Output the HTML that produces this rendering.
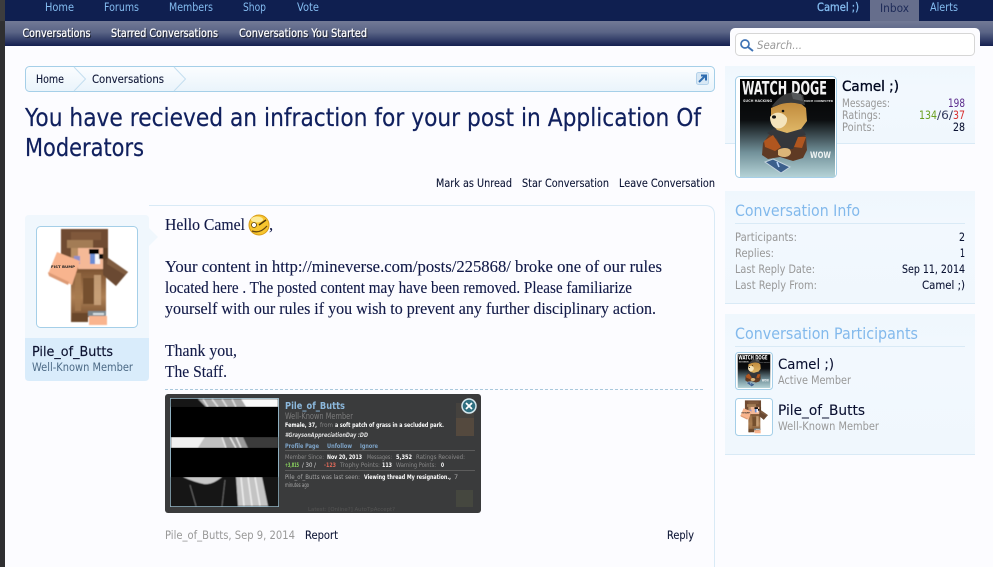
<!DOCTYPE html>
<html><head><meta charset="utf-8"><style>
html,body{margin:0;padding:0;background:#fcfcff;overflow:hidden}
svg{display:block}
text{font-family:"DejaVu Sans","Liberation Sans",sans-serif;font-size:11.500px;white-space:pre}
.s{font-family:"Liberation Serif","DejaVu Serif",serif;font-size:16.500px;fill:#121a48;stroke:#121a48;stroke-width:.12}
.g{fill:#989898}.d{fill:#0c1434;stroke:#0c1434;stroke-width:.1}.n{fill:#84bcf0}
.w{fill:#fff;stroke:#fff;stroke-width:.25;filter:drop-shadow(1px 1px 0 rgba(0,0,0,.55))}
.h{font-size:16px;fill:#82b9ec}
.p{font-size:6.5px;fill:#d8d8d8}.pb{font-size:6.5px;fill:#fff;font-weight:bold}.pg{font-size:6.5px;fill:#8a8a8a}.pl{font-size:6.5px;fill:#7ea4c8;font-weight:bold}
</style></head><body>
<svg width="993" height="567" viewBox="0 0 993 567" xmlns="http://www.w3.org/2000/svg">
<defs>
<filter id="soft" x="-5%" y="-5%" width="110%" height="110%"><feGaussianBlur stdDeviation=".45"/></filter>
<filter id="soft2" x="-5%" y="-5%" width="110%" height="110%"><feGaussianBlur stdDeviation=".6"/></filter>
<linearGradient id="sub" x1="0" y1="0" x2="0" y2="1"><stop offset="0" stop-color="#727a96"/><stop offset=".45" stop-color="#5a6486"/><stop offset="1" stop-color="#142050"/></linearGradient>
<linearGradient id="crumb" x1="0" y1="0" x2="0" y2="1"><stop offset="0" stop-color="#fbfdff"/><stop offset="1" stop-color="#eaf4fb"/></linearGradient>
<linearGradient id="panel" x1="0" y1="0" x2="0" y2="1"><stop offset="0" stop-color="#eff7fd"/><stop offset=".3" stop-color="#f2f8fe"/><stop offset="1" stop-color="#f0f7fd"/></linearGradient>
<linearGradient id="dogbg" x1="0" y1="0" x2="0" y2="1"><stop offset="0" stop-color="#000"/><stop offset=".42" stop-color="#0c0e10"/><stop offset=".75" stop-color="#72919a"/><stop offset="1" stop-color="#b4d2d6"/></linearGradient>
<linearGradient id="coat" x1="0" y1="0" x2="0" y2="1"><stop offset="0" stop-color="#7b5231"/><stop offset=".55" stop-color="#ad7f54"/><stop offset="1" stop-color="#6f4a2b"/></linearGradient>
<linearGradient id="dhead" x1="0" y1="0" x2="0" y2="1"><stop offset="0" stop-color="#c08a3c"/><stop offset="1" stop-color="#e0b868"/></linearGradient>

<symbol id="dog" viewBox="0 0 105 105">
<rect x="5" y="4" width="95" height="98" fill="url(#dogbg)"/>
<text x="7" y="19.500" style="font-size:19px;font-weight:bold;fill:#f2f2f2" textLength="85" lengthAdjust="spacingAndGlyphs">WATCH DOGE</text>
<text x="8" y="27" style="font-size:3.600px;font-weight:bold;fill:#ddd" textLength="29" lengthAdjust="spacingAndGlyphs">SUCH HACKING</text>
<text x="69" y="27" style="font-size:3px;font-weight:bold;fill:#ddd" textLength="29" lengthAdjust="spacingAndGlyphs">MUCH CONNECTED</text>
<path d="M34 60 L28 68 L27 80 L33 84 L45 82 L58 86 L68 83 L72 75 L71 62 L64 54 L40 54Z" fill="#5f3a24"/>
<path d="M32 58 L44 50 L66 50 L71 60 L63 62 L58 74 L46 74 L42 64Z" fill="#35373b"/>
<path d="M29 66 L38 60 L46 72 L40 76 L30 72Z M71 62 L63 62 L59 72 L67 73Z" fill="#b0561f"/>
<path d="M36 33 L48 28 L64 27 L71 33 L72 46 L66 54 L52 58 L42 55 L36 48Z" fill="url(#dhead)"/>
<path d="M35 42 C39 36 48 36 52 43 C53 50 46 55 41 53 C37 52 35 47 35 42Z" fill="#f4e4bc"/>
<path d="M37 31 C44 22 50 18 56 18 L68 20 L70 30 L60 28 C52 27 44 29 38 32Z" fill="#3a3b3c"/>
<path d="M56 17 L66 19 L68 26 L58 24Z" fill="#55585a"/>
<ellipse cx="39" cy="42" rx="2" ry="1.600" fill="#111"/><circle cx="48" cy="36" r="1.300" fill="#111"/>
<path d="M43 75 C48 72 56 72 56 78 C54 83 47 83 43 80Z" fill="#dcb578"/>
<path d="M30 87 L38 84 L55 92 L46 98Z" fill="#3c5f8c" stroke="#c2d2dc" stroke-width="1"/>
<path d="M42 87 L44 92" stroke="#bcd8ff" stroke-width="1.500"/>
<text x="75" y="83" style="font-size:9px;font-weight:bold;fill:#eef2f2" textLength="21" lengthAdjust="spacingAndGlyphs">WOW</text>
</symbol>

<symbol id="skin" viewBox="0 0 105 105">
<g filter="url(#soft)">
<rect x="26" y="4" width="47" height="33" fill="#6f4c30"/>
<rect x="36" y="7" width="30" height="8" fill="#80593a"/>
<rect x="32" y="15" width="26" height="8" fill="#a37c54"/>
<rect x="36" y="23" width="8" height="14" fill="#b98e64"/>
<rect x="66" y="23" width="7" height="14" fill="#5e4028"/>
<path d="M36 42 H71 V90 L66 92 H42 V97 H36Z" fill="url(#coat)"/>
<rect x="48" y="53" width="11" height="26" fill="#74502e"/>
<rect x="40" y="48" width="6" height="38" fill="#a67a50" opacity=".8"/>
<rect x="59" y="50" width="7" height="30" fill="#cda880" opacity=".8"/>
<rect x="37" y="88" width="16" height="9" fill="#6a462c"/>
<rect x="43" y="23" width="25" height="21" fill="#f5b997"/>
<rect x="54" y="24" width="10" height="5" fill="#000"/>
<rect x="55" y="29" width="5" height="10" fill="#6a8cd4"/>
<rect x="60" y="29" width="5" height="10" fill="#f4f6fb"/>
<rect x="64" y="29" width="4" height="5" fill="#111"/>
<rect x="39" y="31" width="6" height="8" fill="#9090cc"/>
<path d="M73 33 L93 47 L81 61 L68 50 L68 36Z" fill="#6a4a32"/>
<path d="M73 33 L93 47 L90 50 L72 39Z" fill="#7f5c40"/>
<path d="M22 27 L45 36 L37 60 L13 49Z" fill="#f8b48e"/>
<path d="M13 47 L34 57 L33 60 L14 51Z" fill="#dd9a74"/>
<rect x="53" y="86" width="18" height="5" fill="#7d8990"/>
<rect x="58" y="88" width="11" height="2" fill="#d8dfe3"/>
<rect x="54" y="91" width="18" height="9" fill="#f9b48e"/>
</g>
<text x="16" y="43" style="font-size:3.600px;font-weight:bold;fill:#222" textLength="24" lengthAdjust="spacingAndGlyphs">FIST BUMP</text>
</symbol>
</defs>

<rect width="993" height="567" fill="#fcfcff"/>
<!-- top nav -->
<rect x="5" y="0" width="988" height="21" fill="#0f1f50"/>
<rect x="5" y="21" width="988" height="25" fill="url(#sub)"/>
<rect x="0" y="0" width="5" height="567" fill="#2f2f31"/>
<rect x="0" y="0" width="5" height="21" fill="#3c3c3e"/>
<text x="45" y="11" class="n" textLength="29" lengthAdjust="spacingAndGlyphs">Home</text>
<text x="104" y="11" class="n" textLength="35" lengthAdjust="spacingAndGlyphs">Forums</text>
<text x="169" y="11" class="n" textLength="44" lengthAdjust="spacingAndGlyphs">Members</text>
<text x="243" y="11" class="n" textLength="23" lengthAdjust="spacingAndGlyphs">Shop</text>
<text x="297" y="11" class="n" textLength="22" lengthAdjust="spacingAndGlyphs">Vote</text>
<text x="817" y="11" class="n" style="stroke:#84bcf0;stroke-width:.3" textLength="42" lengthAdjust="spacingAndGlyphs">Camel ;)</text>
<rect x="870" y="0" width="49" height="21" fill="#666e8c"/>
<text x="880" y="12" style="fill:#1d2a58" textLength="29" lengthAdjust="spacingAndGlyphs">Inbox</text>
<text x="930" y="11" class="n" textLength="28" lengthAdjust="spacingAndGlyphs">Alerts</text>
<text x="22.500" y="37" class="w" textLength="68" lengthAdjust="spacingAndGlyphs">Conversations</text>
<text x="111" y="37" class="w" textLength="107" lengthAdjust="spacingAndGlyphs">Starred Conversations</text>
<text x="239" y="37" class="w" textLength="128" lengthAdjust="spacingAndGlyphs">Conversations You Started</text>

<!-- search -->
<rect x="730" y="28" width="250" height="40" rx="5" fill="#fcfcff"/>
<rect x="735.500" y="33.500" width="239" height="22" rx="4" fill="#fff" stroke="#d6d6d6"/>
<circle cx="745" cy="44" r="4" fill="none" stroke="#3f73b5" stroke-width="1.700"/>
<path d="M748 47 L753 51" stroke="#3f73b5" stroke-width="2"/>
<text x="757" y="49" style="font-style:italic;fill:#999" textLength="45" lengthAdjust="spacingAndGlyphs">Search...</text>

<!-- breadcrumb -->
<rect x="25.500" y="66.500" width="689" height="25" rx="4" fill="url(#crumb)" stroke="#a5cfe8"/>
<path d="M74 67 L85.500 79 L74 91" fill="none" stroke="#c4dff0"/>
<path d="M174 67 L185.500 79 L174 91" fill="none" stroke="#c4dff0"/>
<text x="36" y="83" class="d" textLength="28" lengthAdjust="spacingAndGlyphs">Home</text>
<text x="92" y="83" class="d" textLength="72" lengthAdjust="spacingAndGlyphs">Conversations</text>
<rect x="696.500" y="72.500" width="12" height="12" rx="2" fill="#d8e8f5" stroke="#b4d2ea"/>
<path d="M699 82 L705 76 M701 75.500 H706 V80.500" fill="none" stroke="#2e6cb0" stroke-width="2"/>

<!-- title -->
<text x="25" y="126" style="font-size:25px;fill:#10205e;stroke:#10205e;stroke-width:.2" textLength="676" lengthAdjust="spacingAndGlyphs">You have recieved an infraction for your post in Application Of</text>
<text x="25" y="156" style="font-size:25px;fill:#10205e;stroke:#10205e;stroke-width:.2" textLength="119" lengthAdjust="spacingAndGlyphs">Moderators</text>

<!-- actions -->
<text x="436" y="187" class="d" textLength="76" lengthAdjust="spacingAndGlyphs">Mark as Unread</text>
<text x="522" y="187" class="d" textLength="87" lengthAdjust="spacingAndGlyphs">Star Conversation</text>
<text x="619" y="187" class="d" textLength="96" lengthAdjust="spacingAndGlyphs">Leave Conversation</text>

<!-- message -->
<path d="M149 205.500 H705 Q714.500 205.500 714.500 215 V567" fill="none" stroke="#d9eaf6"/>
<path d="M29 215 H145 Q149 215 149 219 V228 L158 237 L149 246 V338 H25 V219 Q25 215 29 215Z" fill="#f0f7fd"/>
<path d="M25 338 H149 V377 Q149 381 145 381 H29 Q25 381 25 377Z" fill="#d9ecfb"/>
<rect x="36.500" y="226.500" width="101" height="101" rx="4" fill="#fff" stroke="#a5cfe8"/>
<use href="#skin" x="35" y="225" width="105" height="105"/>
<text x="32" y="356" style="font-size:13px;fill:#0c1230;stroke:#0c1230;stroke-width:.15" textLength="81" lengthAdjust="spacingAndGlyphs">Pile_of_Butts</text>
<text x="32" y="371" style="fill:#4c6a86" textLength="101" lengthAdjust="spacingAndGlyphs">Well-Known Member</text>

<text x="165" y="230" class="s" textLength="80" lengthAdjust="spacingAndGlyphs">Hello Camel</text>
<circle cx="259" cy="225" r="10" fill="#f7c52e" stroke="#d89c18"/>
<ellipse cx="257" cy="219.500" rx="6" ry="3" fill="#fdeb98"/>
<circle cx="254" cy="225" r="2.500" fill="#fff" stroke="#5a4010" stroke-width=".8"/>
<path d="M259 225 L266 220" stroke="#4a3408" stroke-width="1.500"/>
<path d="M252 231 Q260 234 267 226" fill="none" stroke="#6a4a10" stroke-width="1.300"/>
<text x="269" y="230" class="s">,</text>
<text x="165" y="272" class="s" textLength="497" lengthAdjust="spacingAndGlyphs">Your content in http://mineverse.com/posts/225868/ broke one of our rules</text>
<text x="165" y="293" class="s" textLength="467" lengthAdjust="spacingAndGlyphs">located here . The posted content may have been removed. Please familiarize</text>
<text x="165" y="314" class="s" textLength="491" lengthAdjust="spacingAndGlyphs">yourself with our rules if you wish to prevent any further disciplinary action.</text>
<text x="165" y="356" class="s" textLength="72" lengthAdjust="spacingAndGlyphs">Thank you,</text>
<text x="165" y="377" class="s" textLength="62" lengthAdjust="spacingAndGlyphs">The Staff.</text>
<path d="M165 389.500 H704" stroke="#a9c8dc" stroke-dasharray="3 2"/>

<!-- popup image -->
<rect x="165" y="394" width="316" height="119" rx="3" fill="#3a3b3c"/>
<rect x="456" y="403" width="18" height="15" fill="#45423e"/>
<rect x="456" y="418" width="18" height="18" fill="#54493e"/>
<rect x="456" y="490" width="17" height="17" fill="#45473f"/>
<rect x="170.500" y="398.500" width="108" height="108" fill="#161616" stroke="#8fb0c0"/>
<g filter="url(#soft2)">
<rect x="171" y="399" width="107" height="8" fill="#141414"/>
<path d="M198 399 H241 L246 407 H206Z" fill="#a8a8a8"/>
<path d="M203 399 L208 407 M212 399 L218 407 M222 399 L227 407 M232 399 L236 407" stroke="#e2e2e2" stroke-width="1.500"/>
<path d="M241 399 H278 V407 H246Z" fill="#fafafa"/>
<rect x="171" y="437" width="107" height="11" fill="#9a9a9a"/>
<path d="M171 437 H205 L198 448 H171Z" fill="#f0f0f0"/>
<path d="M205 437 H222 L226 448 H198Z" fill="#c0c0c0"/>
<path d="M222 437 L226 448 M230 437 L236 448 M236 437 L241 448" stroke="#e8e8e8" stroke-width="1.500"/>
<path d="M243 437 H278 V448 H248Z" fill="#3a3a3a"/>
<rect x="171" y="477" width="107" height="29" fill="#181818"/>
<path d="M183 477 H222 Q212 485 204 484 Q194 482 183 477Z" fill="#c8c8c8"/>
<path d="M236 477 H262 L268 506 H238Z" fill="#c4c4c4"/>
<path d="M241 477 L244 506 M248 477 L252 506 M255 477 L260 506" stroke="#eee" stroke-width="1.500"/>
<path d="M190 485 L196 506 M225 480 L222 506" stroke="#666" stroke-width="1"/>
</g>
<rect x="171" y="407" width="107" height="30" fill="#000"/>
<rect x="171" y="448" width="107" height="29" fill="#000"/>
<circle cx="469" cy="406" r="7" fill="#2f6f80" stroke="#d6e8ee" stroke-width="1.500"/>
<path d="M466 403 L472 409 M472 403 L466 409" stroke="#fff" stroke-width="1.800"/>
<text x="285" y="409" style="font-size:10px;fill:#8cb8dc;font-weight:bold" textLength="60" lengthAdjust="spacingAndGlyphs">Pile_of_Butts</text>
<text x="285" y="419" style="font-size:8.500px;fill:#7c7c7c" textLength="68" lengthAdjust="spacingAndGlyphs">Well-Known Member</text>
<text x="285" y="427" class="pb" textLength="32" lengthAdjust="spacingAndGlyphs">Female, 37,</text>
<text x="320" y="427" class="pg" textLength="13" lengthAdjust="spacingAndGlyphs">from</text>
<text x="335" y="427" class="pb" textLength="109" lengthAdjust="spacingAndGlyphs">a soft patch of grass in a secluded park.</text>
<text x="285" y="437" style="font-size:6.500px;font-style:italic;fill:#ddd;font-weight:bold" textLength="83" lengthAdjust="spacingAndGlyphs">#GraysonAppreciationDay :DD</text>
<text x="285" y="448" class="pl" textLength="34" lengthAdjust="spacingAndGlyphs">Profile Page</text>
<text x="327" y="448" class="pl" textLength="25" lengthAdjust="spacingAndGlyphs">Unfollow</text>
<text x="360" y="448" class="pl" textLength="18" lengthAdjust="spacingAndGlyphs">Ignore</text>
<path d="M285 450.500 H475 M285 470.500 H475" stroke="#5c5c5c"/>
<text x="285" y="459" class="pg" textLength="39" lengthAdjust="spacingAndGlyphs">Member Since:</text>
<text x="327" y="459" class="pb" textLength="35" lengthAdjust="spacingAndGlyphs">Nov 20, 2013</text>
<text x="367" y="459" class="pg" textLength="25" lengthAdjust="spacingAndGlyphs">Messages:</text>
<text x="396" y="459" class="pb" textLength="16" lengthAdjust="spacingAndGlyphs">5,352</text>
<text x="416" y="459" class="pg" textLength="49" lengthAdjust="spacingAndGlyphs">Ratings Received:</text>
<text x="285" y="467" style="font-size:6.500px;fill:#8cd860;font-weight:bold" textLength="14" lengthAdjust="spacingAndGlyphs">+3,815</text>
<text x="302" y="467" class="p" textLength="14" lengthAdjust="spacingAndGlyphs">/ 30 /</text>
<text x="324" y="467" style="font-size:6.500px;fill:#e06a5a;font-weight:bold" textLength="12" lengthAdjust="spacingAndGlyphs">-123</text>
<text x="340" y="467" class="pg" textLength="40" lengthAdjust="spacingAndGlyphs">Trophy Points:</text>
<text x="382" y="467" class="pb" textLength="10" lengthAdjust="spacingAndGlyphs">113</text>
<text x="396" y="467" class="pg" textLength="40" lengthAdjust="spacingAndGlyphs">Warning Points:</text>
<text x="441" y="467" class="pb" textLength="3" lengthAdjust="spacingAndGlyphs">0</text>
<text x="285" y="479" class="p" textLength="75" lengthAdjust="spacingAndGlyphs" style="fill:#a8a8a8">Pile_of_Butts was last seen:</text>
<text x="364" y="479" class="pb" textLength="87" lengthAdjust="spacingAndGlyphs">Viewing thread My resignation.,</text>
<text x="454" y="479" class="p" style="fill:#a8a8a8">7</text>
<text x="285" y="487" class="p" style="fill:#a8a8a8" textLength="24" lengthAdjust="spacingAndGlyphs">minutes ago</text>
<text x="308" y="511" style="font-size:5.500px;fill:#555" textLength="87" lengthAdjust="spacingAndGlyphs">Latest: [Online?] AutoTpAccept?</text>

<text x="165" y="539" class="g" textLength="130" lengthAdjust="spacingAndGlyphs">Pile_of_Butts, Sep 9, 2014</text>
<text x="305" y="539" class="d" textLength="33" lengthAdjust="spacingAndGlyphs">Report</text>
<text x="667" y="539" class="d" textLength="27" lengthAdjust="spacingAndGlyphs">Reply</text>

<!-- sidebar 1 -->
<rect x="725" y="66" width="250" height="78" fill="url(#panel)"/>
<rect x="725" y="143" width="250" height="1" fill="#d9eaf6"/>
<rect x="735.500" y="76.500" width="101" height="101" rx="4" fill="#fff" stroke="#a5cfe8"/>
<use href="#dog" x="735" y="75" width="105" height="105"/>
<text x="842" y="91" style="font-size:14px;fill:#000820;stroke:#000820;stroke-width:.35" textLength="57" lengthAdjust="spacingAndGlyphs">Camel ;)</text>
<text x="842" y="107" class="g" textLength="48" lengthAdjust="spacingAndGlyphs">Messages:</text>
<text x="842" y="119" class="g" textLength="39" lengthAdjust="spacingAndGlyphs">Ratings:</text>
<text x="842" y="131" class="g" textLength="33" lengthAdjust="spacingAndGlyphs">Points:</text>
<text x="948" y="107" style="fill:#5a2a8c" textLength="17" lengthAdjust="spacingAndGlyphs">198</text>
<text x="919" y="119" style="fill:#6aa020" textLength="18" lengthAdjust="spacingAndGlyphs">134</text>
<text x="937" y="119" style="fill:#333c60" textLength="16" lengthAdjust="spacingAndGlyphs">/6/</text>
<text x="953" y="119" style="fill:#d83030" textLength="12" lengthAdjust="spacingAndGlyphs">37</text>
<text x="953" y="131" class="d" textLength="12" lengthAdjust="spacingAndGlyphs">28</text>

<!-- sidebar 2 -->
<rect x="725" y="191" width="250" height="112" fill="url(#panel)"/>
<rect x="725" y="303" width="250" height="1" fill="#d9eaf6"/>
<text x="735" y="216" class="h" textLength="125" lengthAdjust="spacingAndGlyphs">Conversation Info</text>
<rect x="735" y="223" width="230" height="1" fill="#d9eaf6"/>
<text x="735" y="241" class="g" textLength="62" lengthAdjust="spacingAndGlyphs">Participants:</text>
<text x="735" y="257" class="g" textLength="39" lengthAdjust="spacingAndGlyphs">Replies:</text>
<text x="735" y="273" class="g" textLength="80" lengthAdjust="spacingAndGlyphs">Last Reply Date:</text>
<text x="735" y="289" class="g" textLength="82" lengthAdjust="spacingAndGlyphs">Last Reply From:</text>
<text x="959" y="241" class="d" textLength="6" lengthAdjust="spacingAndGlyphs">2</text>
<text x="960" y="257" class="d" textLength="5" lengthAdjust="spacingAndGlyphs">1</text>
<text x="902" y="273" class="d" textLength="63" lengthAdjust="spacingAndGlyphs">Sep 11, 2014</text>
<text x="922" y="289" class="d" textLength="43" lengthAdjust="spacingAndGlyphs">Camel ;)</text>

<!-- sidebar 3 -->
<rect x="725" y="314" width="250" height="141" fill="url(#panel)"/>
<rect x="725" y="454" width="250" height="1" fill="#d9eaf6"/>
<text x="735" y="339" class="h" textLength="183" lengthAdjust="spacingAndGlyphs">Conversation Participants</text>
<rect x="735" y="346" width="230" height="1" fill="#d9eaf6"/>
<rect x="735.500" y="352.500" width="37" height="37" rx="3" fill="#fff" stroke="#a5cfe8"/>
<use href="#dog" x="736" y="353" width="36" height="36"/>
<rect x="735.500" y="398.500" width="37" height="37" rx="3" fill="#fff" stroke="#a5cfe8"/>
<use href="#skin" x="736" y="399" width="36" height="36"/>
<text x="778" y="369" style="font-size:14.500px;fill:#0a1030;stroke:#0a1030;stroke-width:.1" textLength="56" lengthAdjust="spacingAndGlyphs">Camel ;)</text>
<text x="778" y="384" class="g" textLength="73" lengthAdjust="spacingAndGlyphs">Active Member</text>
<text x="778" y="415" style="font-size:14.500px;fill:#0a1030;stroke:#0a1030;stroke-width:.1" textLength="87" lengthAdjust="spacingAndGlyphs">Pile_of_Butts</text>
<text x="778" y="430" class="g" textLength="101" lengthAdjust="spacingAndGlyphs">Well-Known Member</text>
</svg>
</body></html>
